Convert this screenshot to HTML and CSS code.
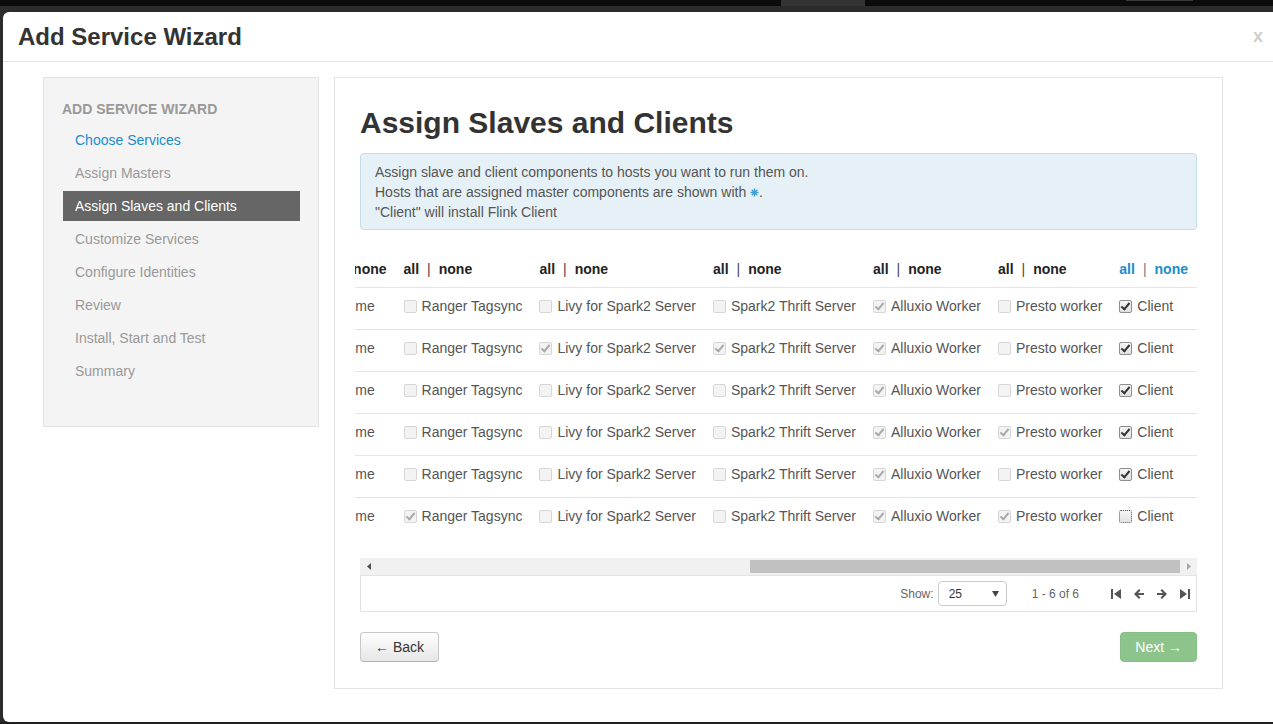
FILE: index.html
```html
<!DOCTYPE html>
<html>
<head>
    <title>Add Service Wizard</title>
    <link rel="stylesheet" href="styles.css">
</head>
<body>
<div class="topbar">
    <span class="tab"></span>
    <span class="tab-line"></span>
</div>
<div class="backdrop">
<div class="modal">
    <div class="modal-header">
        <h1>Add Service Wizard</h1>
        <span class="close">x</span>
    </div>

    <div class="modal-body">
        <div class="sidebar">
            <div class="nav-title">ADD SERVICE WIZARD</div>
            <ul class="steps">
                <li class="done">Choose Services</li>
                <li>Assign Masters</li>
                <li class="active">Assign Slaves and Clients</li>
                <li>Customize Services</li>
                <li>Configure Identities</li>
                <li>Review</li>
                <li>Install, Start and Test</li>
                <li>Summary</li>
            </ul>
        </div>

        <div class="content">
            <h2>Assign Slaves and Clients</h2>
            <div class="alert">
                Assign slave and client components to hosts you want to run them on.<br>
                Hosts that are assigned master components are shown with <svg class="star" width="9" height="9" viewBox="0 0 9 9"><path d="M4.5 0.5V8.5M0.5 4.5H8.5M1.7 1.7L7.3 7.3M7.3 1.7L1.7 7.3"/></svg>.<br>
                "Client" will install Flink Client
            </div>

            <!-- table is scrolled to its right end, earlier columns are clipped -->
            <div class="table-wrap">
                <table>
                    <thead>
                    <tr>
                        <th><a>all</a><span class="sep">|</span><a>none</a></th>
                        <th><a>all</a><span class="sep">|</span><a>none</a></th>
                        <th><a>all</a><span class="sep">|</span><a>none</a></th>
                        <th><a>all</a><span class="sep">|</span><a>none</a></th>
                        <th><a>all</a><span class="sep">|</span><a>none</a></th>
                        <th><a>all</a><span class="sep">|</span><a>none</a></th>
                        <th class="links"><a>all</a><span class="sep">|</span><a>none</a></th>
                    </tr>
                    </thead>
                    <tbody>
                    <tr>
                        <td><span class="cb"></span>Flume</td>
                        <td><span class="cb"></span>Ranger Tagsync</td>
                        <td><span class="cb"></span>Livy for Spark2 Server</td>
                        <td><span class="cb"></span>Spark2 Thrift Server</td>
                        <td><span class="cb on"></span>Alluxio Worker</td>
                        <td><span class="cb"></span>Presto worker</td>
                        <td><span class="cb live on"></span>Client</td>
                    </tr>
                    <tr>
                        <td><span class="cb"></span>Flume</td>
                        <td><span class="cb"></span>Ranger Tagsync</td>
                        <td><span class="cb on"></span>Livy for Spark2 Server</td>
                        <td><span class="cb on"></span>Spark2 Thrift Server</td>
                        <td><span class="cb on"></span>Alluxio Worker</td>
                        <td><span class="cb"></span>Presto worker</td>
                        <td><span class="cb live on"></span>Client</td>
                    </tr>
                    <tr>
                        <td><span class="cb"></span>Flume</td>
                        <td><span class="cb"></span>Ranger Tagsync</td>
                        <td><span class="cb"></span>Livy for Spark2 Server</td>
                        <td><span class="cb"></span>Spark2 Thrift Server</td>
                        <td><span class="cb on"></span>Alluxio Worker</td>
                        <td><span class="cb"></span>Presto worker</td>
                        <td><span class="cb live on"></span>Client</td>
                    </tr>
                    <tr>
                        <td><span class="cb"></span>Flume</td>
                        <td><span class="cb"></span>Ranger Tagsync</td>
                        <td><span class="cb"></span>Livy for Spark2 Server</td>
                        <td><span class="cb"></span>Spark2 Thrift Server</td>
                        <td><span class="cb on"></span>Alluxio Worker</td>
                        <td><span class="cb on"></span>Presto worker</td>
                        <td><span class="cb live on"></span>Client</td>
                    </tr>
                    <tr>
                        <td><span class="cb"></span>Flume</td>
                        <td><span class="cb"></span>Ranger Tagsync</td>
                        <td><span class="cb"></span>Livy for Spark2 Server</td>
                        <td><span class="cb"></span>Spark2 Thrift Server</td>
                        <td><span class="cb on"></span>Alluxio Worker</td>
                        <td><span class="cb"></span>Presto worker</td>
                        <td><span class="cb live on"></span>Client</td>
                    </tr>
                    <tr>
                        <td><span class="cb"></span>Flume</td>
                        <td><span class="cb on"></span>Ranger Tagsync</td>
                        <td><span class="cb"></span>Livy for Spark2 Server</td>
                        <td><span class="cb"></span>Spark2 Thrift Server</td>
                        <td><span class="cb on"></span>Alluxio Worker</td>
                        <td><span class="cb on"></span>Presto worker</td>
                        <td><span class="cb live focus"></span>Client</td>
                    </tr>
                    </tbody>
                </table>
            </div>

            <div class="hscroll">
                <span class="arrow"><svg width="4" height="7" viewBox="0 0 4 7"><polygon points="4,0 4,7 0,3.5" fill="#505050"/></svg></span>
                <span class="thumb"></span>
                <span class="arrow"><svg width="4" height="7" viewBox="0 0 4 7"><polygon points="0,0 0,7 4,3.5" fill="#a8a8a8"/></svg></span>
            </div>

            <div class="pager">
                <span class="show">Show:</span>
                <span class="select">25<svg width="7" height="6" viewBox="0 0 7 6"><polygon points="0,0 7,0 3.5,6" fill="#444"/></svg></span>
                <span class="range">1 - 6 of 6</span>
                <span class="pages">
                    <svg width="10" height="10" viewBox="0 0 10 10"><rect x="0" y="0" width="2" height="10"/><polygon points="10,0 10,10 3,5"/></svg>
                    <svg width="10" height="10" viewBox="0 0 10 10"><path d="M0 5L5 0L6.5 1.5L4 4H10V6H4L6.5 8.5L5 10Z"/></svg>
                    <svg width="10" height="10" viewBox="0 0 10 10"><path d="M10 5L5 0L3.5 1.5L6 4H0V6H6L3.5 8.5L5 10Z"/></svg>
                    <svg width="10" height="10" viewBox="0 0 10 10"><polygon points="0,0 0,10 7,5"/><rect x="8" y="0" width="2" height="10"/></svg>
                </span>
            </div>

            <div class="actions">
                <button class="btn">&larr; Back</button>
                <button class="btn btn-next">Next &rarr;</button>
            </div>
        </div>
    </div>
</div>
</div>
</body>
</html>
```

FILE: styles.css
```css
html, body, h1, h2, ul {
    margin: 0;
    padding: 0;
}
html, body {
    height: 724px;
    overflow: hidden;
}
body {
    background: #1f1f1f;
    font-family: "Liberation Sans", Arial, sans-serif;
    font-size: 14px;
    color: #333;
}

.topbar {
    display: flex;
    align-items: flex-start;
    height: 6px;
    background: #0b0b0b;
}
.tab {
    width: 84px;
    height: 6px;
    margin-left: 781px;
    background: #333;
}
.tab-line {
    width: 67px;
    height: 1px;
    margin-left: 261px;
    background: #3a3a3a;
}
.backdrop {
    padding: 6px 0 0 3px;
    background: #2b2b2b;
}

.modal {
    height: 710px;
    background: #fff;
    border-radius: 6px 0 0 6px;
}
.modal-header {
    display: flex;
    align-items: center;
    height: 49px;
    padding: 0 10px 0 15px;
    border-bottom: 1px solid #e5e5e5;
}
h1 {
    font-size: 24px;
    font-weight: bold;
    color: #333;
}
.close {
    margin-left: auto;
    color: #cfcfcf;
    font-size: 18px;
    font-weight: bold;
}

.modal-body {
    display: flex;
    align-items: flex-start;
    gap: 15px;
    padding: 15px 0 0 40px;
}

/* left wizard nav */
.sidebar {
    width: 276px;
    height: 350px;
    box-sizing: border-box;
    padding: 21px 18px 0 18px;
    background: #f4f4f4;
    border: 1px solid #e3e3e3;
}
.nav-title {
    line-height: 20px;
    margin-bottom: 6px;
    font-weight: bold;
    color: #999;
}
.steps {
    list-style: none;
    margin-left: 1px;
}
.steps li {
    height: 30px;
    line-height: 30px;
    margin-bottom: 3px;
    padding-left: 12px;
    color: #999;
}
.steps .done {
    color: #1a8ccc;
}
.steps .active {
    background: #666;
    color: #fff;
}

/* main panel */
.content {
    width: 889px;
    height: 612px;
    box-sizing: border-box;
    padding: 26px 25px;
    border: 1px solid #e3e3e3;
}
h2 {
    font-size: 30px;
    line-height: 36px;
    margin: 1px 0 12px;
    color: #333;
}
.alert {
    padding: 8px 14px 7px;
    line-height: 20px;
    color: #555;
    background: #e5f1f7;
    border: 1px solid #c3dde9;
    border-radius: 4px;
}
.star {
    stroke: #3f9fd0;
    stroke-width: 1.3;
    vertical-align: 0;
}

.table-wrap {
    display: flex;
    justify-content: flex-end;
    overflow: hidden;
    margin: 21px 0 19px -5px;
}
table {
    flex: none;
    border-collapse: collapse;
    white-space: nowrap;
}
th {
    padding: 8px 9px 8px 8px;
    line-height: 20px;
    text-align: left;
    font-weight: bold;
    color: #222;
}
th .sep {
    margin: 0 8px;
    font-weight: normal;
    color: #444;
}
th.links a {
    color: #1a8ccc;
}
th.links .sep {
    color: #777;
}
td {
    padding: 8px 9px 13px 8px;
    line-height: 20px;
    color: #555;
    border-top: 1px solid #e4e4e4;
}

/* old style checkboxes */
.cb {
    display: inline-block;
    position: relative;
    width: 13px;
    height: 13px;
    box-sizing: border-box;
    margin-right: 5px;
    vertical-align: -2px;
    background: #f3f3f3;
    border: 1px solid #d6d6d6;
    border-radius: 2px;
}
.cb.on::after {
    content: "";
    position: absolute;
    left: 3px;
    top: 0px;
    width: 3px;
    height: 7px;
    border: solid #aaa;
    border-width: 0 2px 2px 0;
    transform: rotate(40deg);
}
.cb.live {
    background: linear-gradient(#f6f6f6, #e2e2e2);
    border-color: #8e8e8e;
}
.cb.live.on::after {
    border-color: #333;
}
.cb.focus {
    border: 1px dotted #555;
}

.hscroll {
    display: flex;
    align-items: center;
    height: 17px;
    background: #f1f1f1;
}
.hscroll .arrow {
    display: flex;
    justify-content: center;
    width: 17px;
}
.hscroll .thumb {
    width: 430px;
    height: 13px;
    margin-left: auto;
    background: #c1c1c1;
}

.pager {
    display: flex;
    justify-content: flex-end;
    align-items: center;
    height: 35px;
    padding-right: 6px;
    border: 1px solid #e3e3e3;
    font-size: 12px;
    color: #666;
}
.show {
    margin-right: 4px;
}
.select {
    display: flex;
    align-items: center;
    justify-content: space-between;
    width: 69px;
    height: 25px;
    box-sizing: border-box;
    padding: 0 7px 0 10px;
    border: 1px solid #ccc;
    border-radius: 4px;
    color: #333;
}
.range {
    margin-left: 25px;
}
.pages {
    display: flex;
    gap: 13px;
    margin-left: 32px;
    fill: #555;
}

.actions {
    display: flex;
    justify-content: space-between;
    margin-top: 20px;
}
.btn {
    height: 30px;
    padding: 0 14px;
    font-family: "Liberation Sans", Arial, sans-serif;
    font-size: 14px;
    color: #333;
    background: linear-gradient(#fff, #e6e6e6);
    border: 1px solid #c8c8c8;
    border-bottom-color: #b3b3b3;
    border-radius: 4px;
}
.btn-next {
    color: #fff;
    background: #8dc48b;
    border-color: #86bf84;
}
```
